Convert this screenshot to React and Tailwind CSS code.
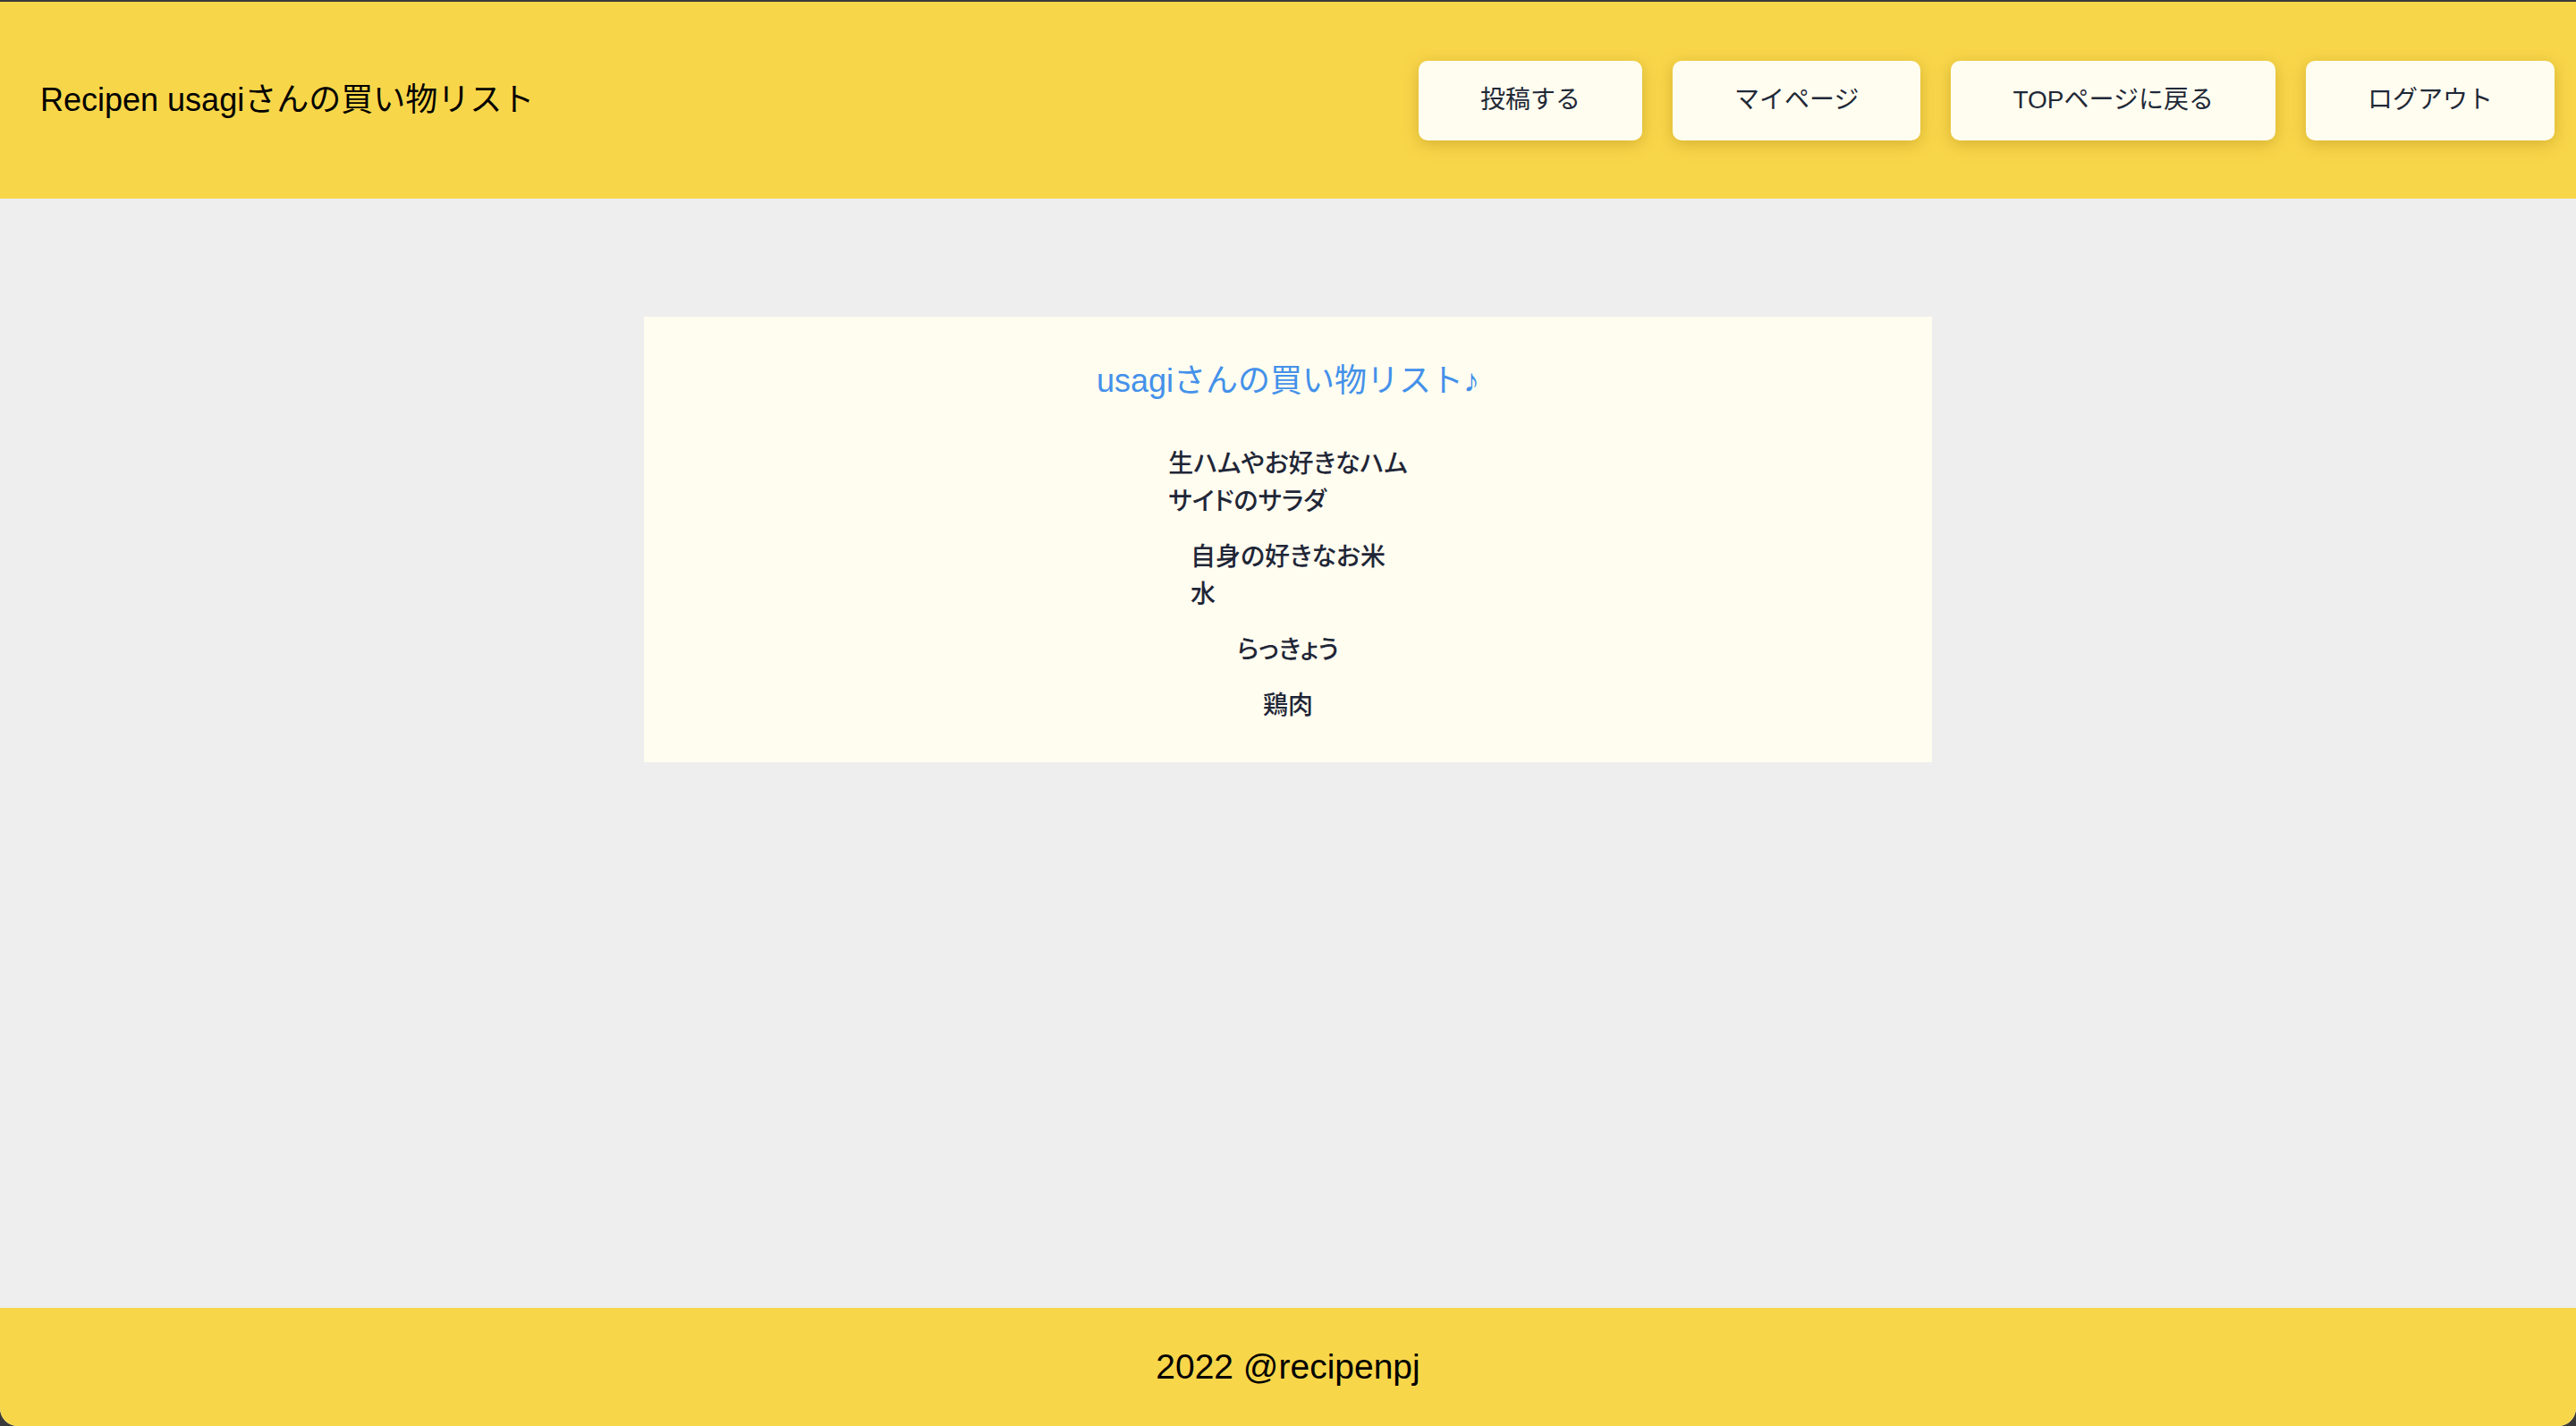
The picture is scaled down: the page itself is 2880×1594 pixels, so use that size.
import React from 'react';

const JP = { fontFamily: '"Liberation Sans", "Noto Sans CJK JP", sans-serif' };

const NAV = ['投稿する', 'マイページ', 'TOPページに戻る', 'ログアウト'];

// shopping list, grouped by recipe
const GROUPS = [
  ['生ハムやお好きなハム', 'サイドのサラダ'],
  ['自身の好きなお米', '水'],
  ['らっきょう'],
  ['鶏肉'],
];

function Header() {
  return (
    <header className="flex h-[220px] shrink-0 items-center justify-between bg-[#f8d64a] pl-[45px] pr-[24px]">
      <h1 className="text-[36px] font-normal text-black">Recipen usagiさんの買い物リスト</h1>
      <nav className="flex items-center gap-[34px]">
        {NAV.map((label) => (
          <button key={label}
            className="flex h-[89px] items-center rounded-[10px] bg-[#fffdf0] px-[69px] text-[28px] text-[#1f2937] shadow-[0_4px_18px_rgba(150,110,0,0.35)]">
            {label}
          </button>
        ))}
      </nav>
    </header>
  );
}

function ShoppingCard() {
  return (
    <section className="mx-auto mt-[132px] w-[1440px] bg-[#fffdf0] pt-[45px] pb-[42px]">
      <h2 className="text-center text-[36px] leading-[54px] text-[#4491ea]">usagiさんの買い物リスト♪</h2>
      <div className="mt-[45px] flex flex-col items-center gap-[20px]">
        {GROUPS.map((items, i) => (
          <ul key={i} className="w-fit text-left">
            {items.map((it) => (
              <li key={it} className="text-[28px] font-medium leading-[42px] text-[#1f2637] [font-feature-settings:'palt']">{it}</li>
            ))}
          </ul>
        ))}
      </div>
    </section>
  );
}

export default function App() {
  return (
    <div className="h-[1594px] w-[2880px] bg-[#3a3a3a] pt-[2px]" style={JP}>
      <div className="flex h-[1592px] flex-col overflow-hidden rounded-b-[20px] bg-[#eeeeee]">
        <Header />
        <main className="flex-1">
          <ShoppingCard />
        </main>
        <footer className="flex h-[132px] shrink-0 items-center justify-center bg-[#f8d64a] text-[39px] text-black">
          2022 @recipenpj
        </footer>
      </div>
    </div>
  );
}
